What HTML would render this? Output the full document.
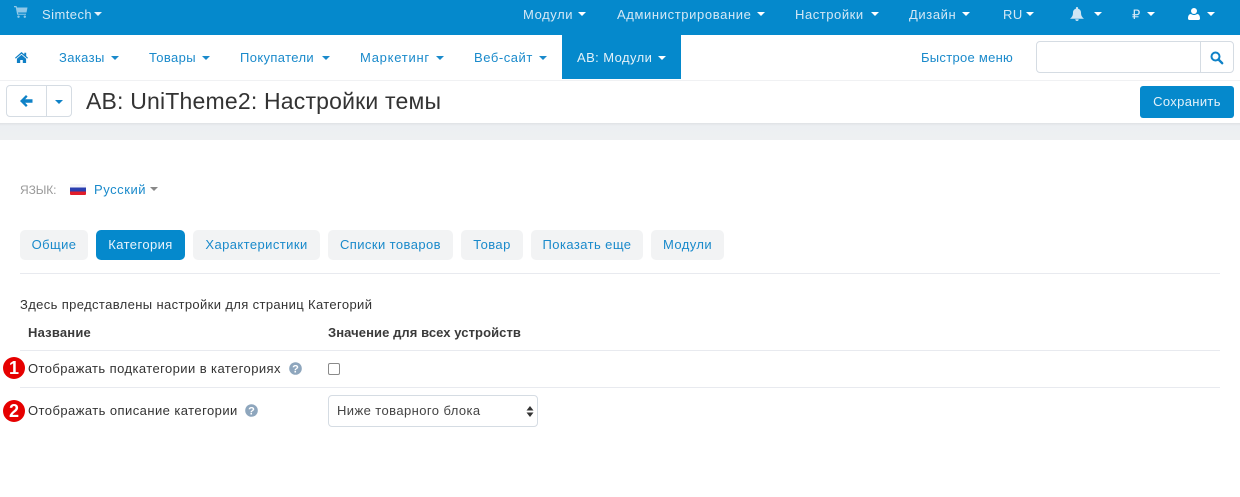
<!DOCTYPE html>
<html lang="ru"><head><meta charset="utf-8"><title>Настройки темы</title>
<style>
*{box-sizing:border-box}
html,body{margin:0;padding:0}
body{width:1240px;height:497px;overflow:hidden;position:relative;background:#fff;font-family:"Liberation Sans",sans-serif;font-size:13px;color:#333}
.a{position:absolute;white-space:nowrap;line-height:16px;letter-spacing:.37px}
.c{position:absolute;width:0;height:0;border-left:4px solid transparent;border-right:4px solid transparent;border-top:4px solid currentColor}
.t{color:#d4e8f5;letter-spacing:.6px}.b{color:#1a8acb}
.tab{position:absolute;top:230px;height:30px;border-radius:5px;background:#f2f3f4;color:#1a8acb;line-height:30px;text-align:center;letter-spacing:.42px}
.num{position:absolute;left:3px;width:22px;height:22px;border-radius:50%;background:#e60000;color:#fff;font-size:18px;line-height:22px;text-align:center;font-weight:bold}
.line{position:absolute;left:20px;width:1200px;height:1px;background:#e8eaef}
svg{position:absolute}
</style></head><body>
<div style="position:absolute;left:0;top:0;width:1240px;height:35px;background:#0589cc"></div>
<svg style="left:14px;top:5px" width="14" height="13" viewBox="0 0 14 13"><path fill="#8fc8e8" d="M0 1h2.500l.5 1.500h10.500l-1 5H4l.3 1.200H12v1.100H3.200L1.700 2.200H0zM4.500 10.500a1.200 1.200 0 1 0 .01 0zM10.800 10.500a1.200 1.200 0 1 0 .01 0z"/></svg>
<div class="a t" style="left:42px;top:7px;letter-spacing:.45px">Simtech</div><div class="c" style="left:94px;top:12px;color:#e5f2fa"></div>
<div class="a t" style="left:523px;top:7px">Модули</div><div class="c" style="left:578px;top:12px;color:#fff"></div>
<div class="a t" style="left:617px;top:7px;letter-spacing:.62px">Администрирование</div><div class="c" style="left:757px;top:12px;color:#fff"></div>
<div class="a t" style="left:795px;top:7px;letter-spacing:.55px">Настройки</div><div class="c" style="left:871px;top:12px;color:#fff"></div>
<div class="a t" style="left:909px;top:7px">Дизайн</div><div class="c" style="left:962px;top:12px;color:#fff"></div>
<div class="a t" style="left:1003px;top:7px;letter-spacing:.45px">RU</div><div class="c" style="left:1026px;top:12px;color:#fff"></div>
<svg style="left:1070px;top:7px" width="14" height="14" viewBox="0 0 14 14"><path fill="#cfe6f4" d="M7 0c.7 0 1.100.4 1.100 1v.7c1.900.5 2.900 2 2.900 3.800 0 3 .9 4.500 3 6.300H0c2.100-1.800 3-3.300 3-6.300 0-1.800 1-3.300 2.900-3.800V1C5.900.4 6.300 0 7 0zM5.300 12.300h3.400a1.700 1.700 0 0 1-3.400 0z"/></svg>
<div class="c" style="left:1094px;top:12px;color:#fff"></div>
<div class="a t" style="left:1132px;top:7px">₽</div><div class="c" style="left:1147px;top:12px;color:#fff"></div>
<svg style="left:1188px;top:8px" width="12" height="12" viewBox="0 0 12 12"><circle cx="6" cy="3" r="3" fill="#fff"/><path fill="#fff" d="M0 10.500c0-3 1.200-4.500 3-4.500 1 .7 2 1 3 1s2-.3 3-1c1.800 0 3 1.500 3 4.500 0 1-.7 1.500-1.500 1.500h-9C.7 12 0 11.500 0 10.500z"/></svg>
<div class="c" style="left:1207px;top:12px;color:#fff"></div>

<div style="position:absolute;left:0;top:35px;width:1240px;height:46px;background:#fff;border-bottom:1px solid #f0f1f3"></div>
<svg style="left:15px;top:52px" width="13" height="11" viewBox="0 0 13 11"><path fill="#1080c6" d="M6.500 0 9.300 2.400V.8h1.900v3.300L13 5.700l-.8.9-5.700-4.900L.8 6.600 0 5.700zM1.900 6.700l4.600-4 4.600 4V11H7.800V8H5.200v3H1.900z"/></svg>
<div class="a b" style="left:59px;top:50px">Заказы</div><div class="c b" style="left:111px;top:56px"></div>
<div class="a b" style="left:149px;top:50px">Товары</div><div class="c b" style="left:202px;top:56px"></div>
<div class="a b" style="left:240px;top:50px">Покупатели</div><div class="c b" style="left:322px;top:56px"></div>
<div class="a b" style="left:360px;top:50px;letter-spacing:.74px">Маркетинг</div><div class="c b" style="left:436px;top:56px"></div>
<div class="a b" style="left:474px;top:50px;letter-spacing:.55px">Веб-сайт</div><div class="c b" style="left:539px;top:56px"></div>
<div style="position:absolute;left:562px;top:35px;width:119px;height:44px;background:#0589cc"></div>
<div class="a" style="left:577px;top:50px;color:#e3f1f9;letter-spacing:.42px">AB: Модули</div><div class="c" style="left:658px;top:56px;color:#fff"></div>
<div class="a b" style="left:921px;top:50px;letter-spacing:.28px">Быстрое меню</div>
<div style="position:absolute;left:1036px;top:41px;width:198px;height:32px;border:1px solid #d5dce3;border-radius:4px"></div>
<div style="position:absolute;left:1200px;top:41px;width:1px;height:32px;background:#d5dce3"></div>
<svg style="left:1210px;top:51px" width="14" height="14" viewBox="0 0 14 14"><circle cx="5.500" cy="5.500" r="4" fill="none" stroke="#0f82c7" stroke-width="2"/><path d="M8.500 8.500l3.700 3.700" stroke="#0f82c7" stroke-width="2.400" stroke-linecap="round"/></svg>

<div style="position:absolute;left:0;top:123px;width:1240px;height:17px;background:linear-gradient(#dfe2e5,#eceff2 3px,#eef0f2)"></div>
<div style="position:absolute;left:0;top:140px;width:1240px;height:357px;background:#fff;border-radius:4px 4px 0 0"></div>
<div style="position:absolute;left:6px;top:85px;width:66px;height:32px;border:1px solid #d5dce3;border-radius:4px;background:#fff"></div>
<div style="position:absolute;left:46px;top:85px;width:1px;height:32px;background:#d5dce3"></div>
<svg style="left:20px;top:95px" width="13" height="12" viewBox="0 0 13 12"><path fill="#0f82c7" d="M6 0 7.600 1.600 5.200 4.300H12.500V7.700H5.200L7.600 10.400 6 12 0 6z"/></svg>
<div class="c" style="left:55px;top:100px;color:#0f82c7"></div>
<div class="a" style="left:86px;top:88px;font-size:23px;line-height:26px;letter-spacing:.19px;color:#333">AB: UniTheme2: Настройки темы</div>
<div style="position:absolute;left:1140px;top:86px;width:94px;height:32px;background:#0589cc;border-radius:3px;color:#e3f1f9;text-align:center;line-height:32px;letter-spacing:.35px">Сохранить</div>

<div class="a" style="left:20px;top:182px;color:#999;font-size:12px;letter-spacing:-.1px">ЯЗЫК:</div>
<div style="position:absolute;left:70px;top:184px;width:16px;height:11px;background:linear-gradient(#f4f4fa 0 33%,#2b3fb0 33% 66%,#e11d2a 66%);border-radius:1px"></div>
<div class="a b" style="left:94px;top:182px;letter-spacing:.55px">Русский</div><div class="c" style="left:150px;top:187px;color:#888"></div>

<div class="tab" style="left:20px;width:68px">Общие</div>
<div class="tab" style="left:96px;width:89px;background:#0589cc;color:#e9f4fb">Категория</div>
<div class="tab" style="left:193px;width:127px">Характеристики</div>
<div class="tab" style="left:328px;width:125px">Списки товаров</div>
<div class="tab" style="left:461px;width:62px">Товар</div>
<div class="tab" style="left:531px;width:112px">Показать еще</div>
<div class="tab" style="left:651px;width:73px">Модули</div>
<div class="line" style="top:273px"></div>
<div class="a" style="left:20px;top:297px">Здесь представлены настройки для страниц Категорий</div>
<div class="a" style="left:28px;top:325px;font-weight:bold;color:#3a3a3a;letter-spacing:.2px">Название</div>
<div class="a" style="left:328px;top:325px;font-weight:bold;color:#3a3a3a;letter-spacing:.08px">Значение для всех устройств</div>
<div class="line" style="top:350px"></div>
<div class="line" style="top:387px"></div>
<div class="num" style="top:357px">1</div>
<div class="num" style="top:400px">2</div>
<div class="a" style="left:28px;top:361px;letter-spacing:.42px">Отображать подкатегории в категориях</div>
<div class="a" style="left:28px;top:403px;letter-spacing:.44px">Отображать описание категории</div>
<svg style="left:289px;top:362px" width="13" height="13" viewBox="0 0 13 13"><circle cx="6.500" cy="6.500" r="6.300" fill="#8ea6bd"/><text x="6.500" y="10.500" font-size="11" font-weight="bold" text-anchor="middle" fill="#fff" font-family="Liberation Sans">?</text></svg>
<svg style="left:245px;top:404px" width="13" height="13" viewBox="0 0 13 13"><circle cx="6.500" cy="6.500" r="6.300" fill="#8ea6bd"/><text x="6.500" y="10.500" font-size="11" font-weight="bold" text-anchor="middle" fill="#fff" font-family="Liberation Sans">?</text></svg>
<div style="position:absolute;left:328px;top:363px;width:12px;height:12px;border:1px solid #8a8a8a;border-radius:2px;background:#fff"></div>
<div style="position:absolute;left:328px;top:395px;width:210px;height:32px;border:1px solid #d5dce3;border-radius:4px;background:#fff"></div>
<div class="a" style="left:337px;top:403px;color:#444;letter-spacing:.42px">Ниже товарного блока</div>
<svg style="left:526px;top:406px" width="8" height="11" viewBox="0 0 8 11"><path fill="#333" d="M4 0 7.500 4.500H.5zM4 11 .5 6.500h7z"/></svg>
</body></html>
